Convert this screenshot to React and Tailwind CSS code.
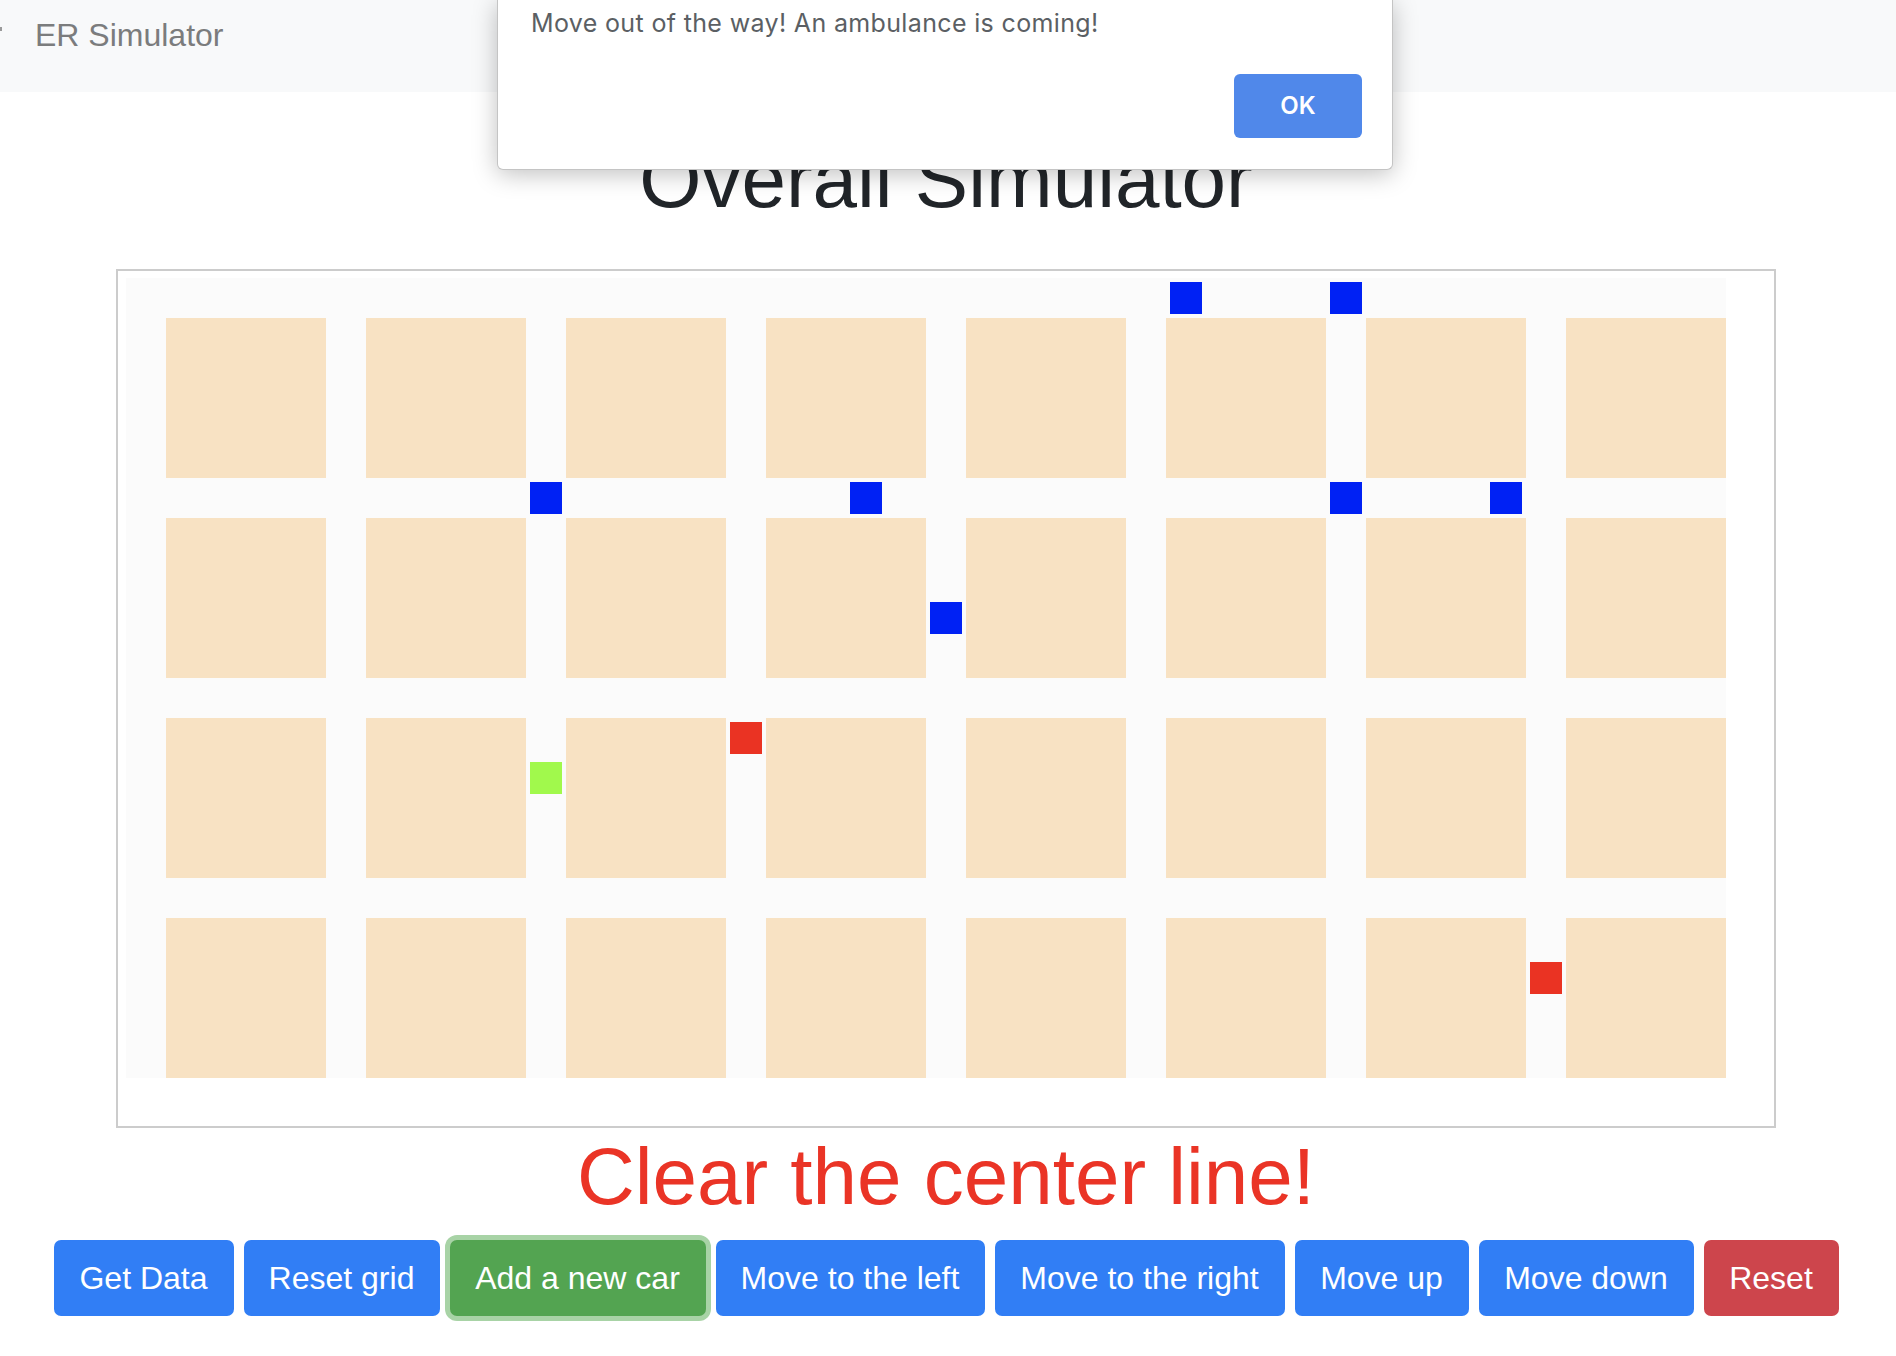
import React from "react";

const CARS = [
  { x: 1044, y: 4, c: "bg-[#0021f4]" },
  { x: 1204, y: 4, c: "bg-[#0021f4]" },
  { x: 404, y: 204, c: "bg-[#0021f4]" },
  { x: 724, y: 204, c: "bg-[#0021f4]" },
  { x: 1204, y: 204, c: "bg-[#0021f4]" },
  { x: 1364, y: 204, c: "bg-[#0021f4]" },
  { x: 804, y: 324, c: "bg-[#0021f4]" },
  { x: 604, y: 444, c: "bg-[#ea3323]" },
  { x: 404, y: 484, c: "bg-[#a1f94c]" },
  { x: 1404, y: 684, c: "bg-[#ea3323]" },
];

const BUTTONS = [
  { label: "Get Data", w: "w-[180px]", c: "bg-[#317ef5]" },
  { label: "Reset grid", w: "w-[196px]", c: "bg-[#317ef5]" },
  { label: "Add a new car", w: "w-[256px]", c: "bg-[#53a451] ring-[5px] ring-[#a8d3a6]" },
  { label: "Move to the left", w: "w-[269px]", c: "bg-[#317ef5]" },
  { label: "Move to the right", w: "w-[290px]", c: "bg-[#317ef5]" },
  { label: "Move up", w: "w-[174px]", c: "bg-[#317ef5]" },
  { label: "Move down", w: "w-[215px]", c: "bg-[#317ef5]" },
  { label: "Reset", w: "w-[135px]", c: "bg-[#cd454c]" },
];

export default function App() {
  const cells = Array.from({ length: 32 });
  return (
    <div className="relative min-h-[1356px] w-full overflow-hidden bg-white font-['Liberation_Sans',Arial,sans-serif]">
      {/* Navbar */}
      <nav className="relative h-[92px] bg-[#f8f9fa] pl-[35px] pt-[11px]">
        <div className="absolute left-0 top-[27px] h-[4px] w-[2px] bg-[#9a9a9a]" />
        <span className="text-[32px] leading-[48px] text-[#7b7c7d]">ER Simulator</span>
      </nav>

      {/* Main */}
      <main className="flex w-[1892px] flex-col items-center">
        <h1 className="mt-[40px] text-[80px] font-normal leading-[96px] text-[#212529]">
          Overall Simulator
        </h1>

        <div className="mt-[41px] h-[859px] w-[1660px] border-2 border-[#cccccc] pl-[8px] pt-[7px]">
          <div className="relative grid h-[800px] w-[1600px] grid-cols-8 bg-[#fbfbfb]">
            {cells.map((_, i) => (
              <div key={i} className="pl-[40px] pt-[40px]">
                <div className="h-[160px] w-[160px] bg-[#f8e2c3]" />
              </div>
            ))}
            {CARS.map((car, i) => (
              <div
                key={i}
                className={`absolute h-[32px] w-[32px] ${car.c}`}
                style={{ left: car.x, top: car.y }}
              />
            ))}
          </div>
        </div>

        <p className="mt-[1px] text-[80px] leading-[96px] text-[#ea3426]">Clear the center line!</p>

        <div className="mt-[15px] flex gap-[10px]">
          {BUTTONS.map((b) => (
            <button
              key={b.label}
              className={`flex h-[76px] items-center justify-center rounded-[7px] text-[32px] leading-[48px] text-white ${b.w} ${b.c}`}
            >
              {b.label}
            </button>
          ))}
        </div>
      </main>

      {/* Alert dialog */}
      <div className="absolute left-[497px] top-0 h-[170px] w-[896px] rounded-b-[6px] border-x border-b border-[#c4c4c4] bg-white shadow-[0_4px_24px_rgba(0,0,0,0.25)] font-['Inter','Liberation_Sans',sans-serif]">
        <p className="pl-[33px] pt-[8px] text-[25px] leading-[30px] tracking-[0.35px] text-[#5b5f64]">
          Move out of the way! An ambulance is coming!
        </p>
        <button className="absolute left-[736px] top-[74px] flex h-[64px] w-[128px] items-center justify-center rounded-[6px] bg-[#5088ea] text-[24px] font-semibold text-white">
          OK
        </button>
      </div>
    </div>
  );
}
